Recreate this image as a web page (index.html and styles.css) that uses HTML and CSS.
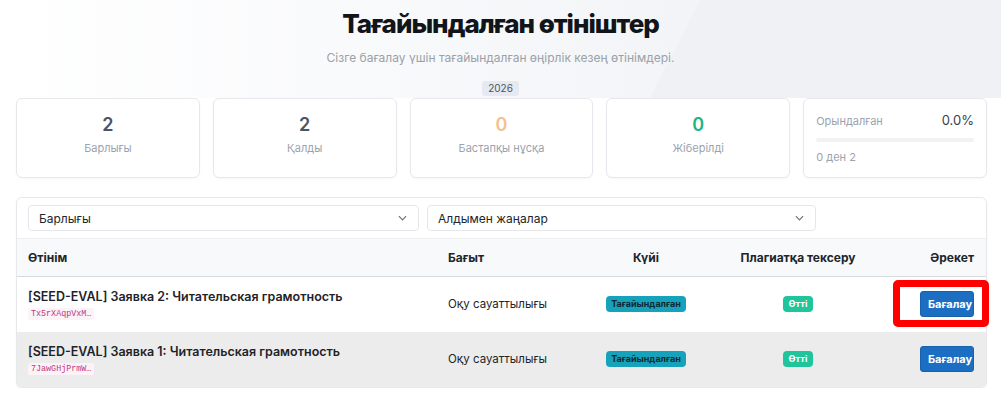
FILE: index.html
```html
<!DOCTYPE html>
<html lang="kk">
<head>
<meta charset="utf-8">
<title>Тағайындалған өтініштер</title>
<link rel="stylesheet" href="styles.css">
</head>
<body>
<div class="page">
  <header class="hero">
    <h1 class="hero-title">Тағайындалған өтініштер</h1>
    <p class="hero-sub">Сізге бағалау үшін тағайындалған өңірлік кезең өтінімдері.</p>
    <span class="year">2026</span>
  </header>

  <section class="stats">
    <div class="stat">
      <div class="stat-num">2</div>
      <div class="stat-label">Барлығы</div>
    </div>
    <div class="stat">
      <div class="stat-num">2</div>
      <div class="stat-label">Қалды</div>
    </div>
    <div class="stat">
      <div class="stat-num orange">0</div>
      <div class="stat-label">Бастапқы нұсқа</div>
    </div>
    <div class="stat">
      <div class="stat-num green">0</div>
      <div class="stat-label">Жіберілді</div>
    </div>
    <div class="stat stat-progress">
      <div class="prog-head">
        <span class="prog-label">Орындалған</span>
        <span class="prog-val">0.0%</span>
      </div>
      <div class="prog-bar"><div class="prog-fill" style="width:0%"></div></div>
      <div class="prog-label">0 ден 2</div>
    </div>
  </section>

  <section class="panel">
    <div class="filters">
      <div class="select"><span>Барлығы</span><svg class="chev" viewBox="0 0 10 6" width="9" height="6"><path d="M1 1l4 4 4-4" fill="none" stroke="#6b7280" stroke-width="1.3"/></svg></div>
      <div class="select"><span>Алдымен жаңалар</span><svg class="chev" viewBox="0 0 10 6" width="9" height="6"><path d="M1 1l4 4 4-4" fill="none" stroke="#6b7280" stroke-width="1.3"/></svg></div>
    </div>
    <table class="grid">
      <colgroup>
        <col class="c1"><col class="c2"><col class="c3"><col class="c4"><col class="c5">
      </colgroup>
      <thead>
        <tr>
          <th class="left">Өтінім</th>
          <th class="left">Бағыт</th>
          <th class="center">Күйі</th>
          <th class="center">Плагиатқа тексеру</th>
          <th class="right">Әрекет</th>
        </tr>
      </thead>
      <tbody>
        <tr>
          <td>
            <div class="app-title">[SEED-EVAL] Заявка 2: Читательская грамотность</div>
            <code class="app-code">Tx5rXAqpVxM…</code>
          </td>
          <td class="dir">Оқу сауаттылығы</td>
          <td class="center"><span class="badge info">Тағайындалған</span></td>
          <td class="center"><span class="badge ok">Өтті</span></td>
          <td class="right"><button class="btn">Бағалау</button></td>
        </tr>
        <tr class="alt">
          <td>
            <div class="app-title">[SEED-EVAL] Заявка 1: Читательская грамотность</div>
            <code class="app-code">7JawGHjPrmW…</code>
          </td>
          <td class="dir">Оқу сауаттылығы</td>
          <td class="center"><span class="badge info">Тағайындалған</span></td>
          <td class="center"><span class="badge ok">Өтті</span></td>
          <td class="right"><button class="btn">Бағалау</button></td>
        </tr>
      </tbody>
    </table>
  </section>

  <div class="highlight"></div>
</div>
</body>
</html>
```

FILE: styles.css
```css
* { box-sizing: border-box; }
html, body { margin: 0; padding: 0; background: #fff; }
body {
  font-family: Inter, "Noto Sans", "Liberation Sans", sans-serif;
  color: #212529;
}
.page { position: relative; width: 1001px; }

.hero {
  position: relative;
  height: 98px;
  padding-top: 6px;
  text-align: center;
  background: linear-gradient(90deg, #ffffff 0%, #f8f9fb 40%, #f3f4f7 70%);
  overflow: hidden;
}
.hero::after {
  content: "";
  position: absolute;
  top: 0; right: 0; bottom: 0; left: 0;
  background: #eef0f4;
  clip-path: polygon(700px 0, 1001px 0, 1001px 100%, 650px 100%);
  opacity: 0.7;
}
.hero > * { position: relative; z-index: 1; }
.hero-title {
  margin: 0;
  font-size: 26px;
  line-height: 36px;
  font-weight: 800;
  letter-spacing: -1px;
  color: #111418;
}
.hero-sub {
  margin: 8px 0 0;
  font-size: 12px;
  line-height: 16px;
  color: #9aa1a9;
}
.year {
  display: inline-block;
  margin-top: 15px;
  padding: 1px 6px;
  font-size: 10px;
  line-height: 13px;
  color: #4b5563;
  background: #e6eaf0;
  border-radius: 3px;
}

.stats {
  display: grid;
  grid-template-columns: repeat(5, 1fr);
  gap: 13px;
  width: 971px;
  margin: 0 0 0 16px;
}
.stat {
  height: 80px;
  border: 1px solid #e6e8eb;
  border-radius: 6px;
  background: #fff;
  text-align: center;
  padding-top: 14px;
  box-shadow: 0 1px 2px rgba(0,0,0,0.03);
}
.stat-num {
  font-size: 18px;
  line-height: 24px;
  font-weight: 600;
  color: #4a5668;
}
.stat-num.orange { color: #f5c08f; }
.stat-num.green { color: #20b486; }
.stat-label {
  margin-top: 1px;
  font-size: 11px;
  line-height: 20px;
  color: #9ca3af;
}
.stat-progress {
  text-align: left;
  padding: 13px 12px 0 12px;
}
.prog-head {
  display: flex;
  justify-content: space-between;
  align-items: baseline;
}
.prog-label {
  font-size: 11px;
  line-height: 16px;
  color: #9ca3af;
}
.prog-val {
  font-size: 13px;
  line-height: 16px;
  color: #374151;
}
.prog-bar {
  height: 4px;
  margin: 9px 0 7px;
  background: #f1f2f4;
  border-radius: 2px;
}
.prog-fill { height: 100%; background: #1b6ec2; border-radius: 2px; }

.panel {
  width: 971px;
  margin: 19px 0 0 16px;
  border: 1px solid #e6e8eb;
  border-radius: 6px;
  background: #fff;
  overflow: hidden;
  box-shadow: 0 1px 2px rgba(0,0,0,0.05);
}
.filters {
  display: flex;
  gap: 8px;
  padding: 7px 11px 7px 11px;
}
.select {
  display: flex;
  align-items: center;
  justify-content: space-between;
  width: 391px;
  height: 26px;
  padding: 0 11px 0 10px;
  border: 1px solid #e5e7eb;
  border-radius: 4px;
  font-size: 12px;
  color: #212529;
}
.select + .select { width: 389px; }
.chev { display: block; }

.grid {
  width: 100%;
  border-collapse: collapse;
  table-layout: fixed;
}
.c1 { width: 420px; }
.c2 { width: 133px; }
.c3 { width: 152px; }
.c4 { width: 152px; }
.c5 { width: auto; }
.grid th {
  height: 38px;
  background: #f8f9fa;
  border-top: 1px solid #eceef0;
  border-bottom: 1px solid #d6d9dd;
  font-size: 12px;
  font-weight: 700;
  color: #212529;
  padding: 0 12px 0 11px;
}
.grid td {
  padding: 0 12px 0 11px;
  font-size: 11.5px;
  color: #212529;
  vertical-align: middle;
}
.grid tbody tr { height: 55px; }
.grid tbody tr.alt { background: #ececec; height: 55px; }
.left { text-align: left; }
.center { text-align: center; }
.right { text-align: right; }
.grid th.center, .grid td.center { padding: 0; }

.app-title {
  font-size: 12.5px;
  line-height: 16px;
  font-weight: 600;
  color: #1f2328;
}
.app-code {
  display: inline-block;
  margin-top: 3px;
  padding: 1px 3px;
  font-family: "Liberation Mono", "DejaVu Sans Mono", monospace;
  font-size: 8.4px;
  line-height: 10px;
  color: #c0397e;
  background: #fbf3f7;
  border-radius: 2px;
}

.badge {
  display: inline-block;
  padding: 2px 5px;
  font-size: 9px;
  line-height: 12px;
  font-weight: 700;
  border-radius: 4px;
}
.badge.info { background: #17a2bb; color: #0d2a33; }
.badge.ok { background: #20c59b; color: #fff; padding: 2px 6px; }

.btn {
  font-family: inherit;
  font-size: 11px;
  font-weight: 700;
  line-height: 14px;
  color: #fff;
  background: #1b6ec2;
  border: 1px solid #1861ac;
  border-radius: 3px;
  padding: 5px 7px;
  width: 54px;
  cursor: pointer;
}

.highlight {
  position: absolute;
  left: 893px;
  top: 280px;
  width: 96px;
  height: 47px;
  border: 7px solid #ff0000;
  border-radius: 5px;
  pointer-events: none;
}
```
